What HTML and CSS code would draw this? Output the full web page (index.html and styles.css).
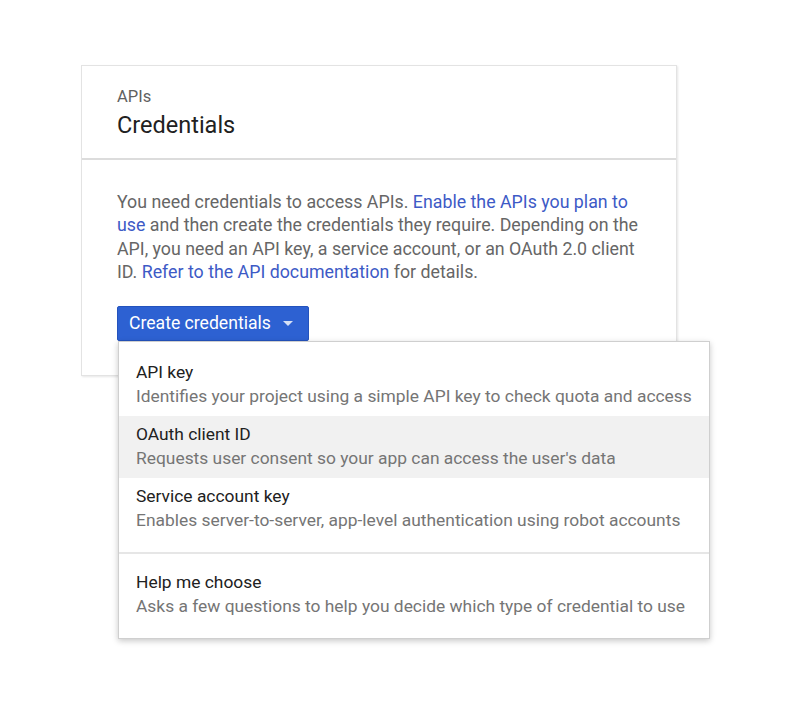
FILE: index.html
```html
<!DOCTYPE html>
<html>
<head>
<meta charset="utf-8">
<link rel="stylesheet" href="styles.css">
</head>
<body>
<div class="page">
<div class="card">
  <div class="card-header">
    <div class="eyebrow">APIs</div>
    <div class="title">Credentials</div>
  </div>
  <div class="card-body">
    <p class="intro">You need credentials to access APIs. <a class="link">Enable the APIs you plan to use</a> and then create the credentials they require. Depending on the API, you need an API key, a service account, or an OAuth 2.0 client ID. <a class="link">Refer to the API documentation</a> for details.</p>
    <div class="dropdown">
      <button class="btn">Create credentials <span class="caret"></span></button>
      <div class="menu">
        <div class="menu-section">
          <div class="item">
            <div class="item-title">API key</div>
            <div class="item-desc">Identifies your project using a simple API key to check quota and access</div>
          </div>
          <div class="item active">
            <div class="item-title">OAuth client ID</div>
            <div class="item-desc">Requests user consent so your app can access the user's data</div>
          </div>
          <div class="item">
            <div class="item-title">Service account key</div>
            <div class="item-desc">Enables server-to-server, app-level authentication using robot accounts</div>
          </div>
        </div>
        <div class="menu-section divided">
          <div class="item">
            <div class="item-title">Help me choose</div>
            <div class="item-desc">Asks a few questions to help you decide which type of credential to use</div>
          </div>
        </div>
      </div>
    </div>
  </div>
</div>
</div>
</body>
</html>
```
FILE: styles.css
```css
html, body {
  margin: 0;
  padding: 0;
  background: #ffffff;
}
body {
  font-family: Roboto, "Liberation Sans", Arial, sans-serif;
}
.page {
  min-height: 711px;
  box-sizing: border-box;
  padding: 65px 0 0 81px;
}
.card {
  width: 594px;
  height: 309px;
  border: 1px solid #e3e3e3;
  box-shadow: 1px 1px 2px rgba(0,0,0,0.10);
  background: #fff;
  box-sizing: content-box;
}
.card-header {
  padding: 21px 35px 19px;
  border-bottom: 2px solid #dcdcdc;
}
.eyebrow {
  font-size: 16.5px;
  line-height: 20px;
  color: #616161;
}
.title {
  margin-top: 4px;
  font-size: 23.5px;
  line-height: 28px;
  color: #212121;
}
.card-body {
  padding: 30px 35px 0;
}
.intro {
  margin: 0;
  font-size: 17.8px;
  line-height: 23.4px;
  color: #666666;
  width: 530px;
}
.link {
  color: #3d5ac6;
  text-decoration: none;
}
.dropdown {
  position: relative;
  margin-top: 22px;
}
.btn {
  display: flex;
  align-items: center;
  gap: 12px;
  height: 35px;
  padding: 0 15px 0 11px;
  background: #2d61d2;
  border: 1px solid #2453bd;
  border-radius: 2px;
  color: #ffffff;
  font-family: Roboto, "Liberation Sans", Arial, sans-serif;
  font-size: 17.6px;
}
.caret {
  width: 0;
  height: 0;
  border-left: 5px solid transparent;
  border-right: 5px solid transparent;
  border-top: 5px solid #d6e0f5;
  margin-top: 1px;
}
.menu {
  position: absolute;
  top: 35px;
  left: 1px;
  width: 590px;
  background: #fff;
  border: 1px solid #cfcfcf;
  box-shadow: 0 2px 6px rgba(0,0,0,0.22);
  z-index: 2;
}
.menu-section {
  padding: 12px 0 12px;
}
.menu-section.divided {
  border-top: 2px solid #e6e6e6;
  padding-top: 10px;
  padding-bottom: 12px;
}
.item {
  height: 62px;
  box-sizing: border-box;
  padding: 6px 18px 8px 17px;
}
.item.active {
  background: #f1f1f1;
}
.item-title {
  font-size: 17.4px;
  line-height: 24px;
  color: #212121;
}
.item-desc {
  font-size: 17.4px;
  line-height: 24px;
  color: #757575;
  white-space: nowrap;
}
```
